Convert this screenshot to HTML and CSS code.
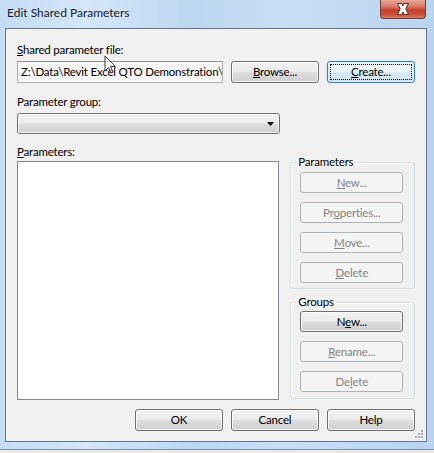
FILE: index.html
```html
<!DOCTYPE html>
<html lang="en">
<head>
  <meta charset="UTF-8">
  <title>Edit Shared Parameters</title>
  <link rel="stylesheet" href="styles.css">
</head>
<body>
  <div class="window">
    <div class="titlebar">
      <span class="title">Edit Shared Parameters</span>
      <div class="close-btn">
        <svg width="18" height="12" viewBox="0 0 18 12">
          <path d="M3.5 0.5 L8 0.5 L9 3 L10 0.5 L14.5 0.5 L11.8 6 L14.5 11.5 L10 11.5 L9 9 L8 11.5 L3.5 11.5 L6.2 6 Z" fill="#fff" stroke="#5a2a22" stroke-width="1"/>
        </svg>
      </div>
    </div>

    <div class="client">
      <div class="label"><u>S</u>hared parameter file:</div>
      <div class="file-row">
        <div class="textbox">Z:\Data\Revit Excel QTO Demonstration\(</div>
        <button type="button" class="btn"><u>B</u>rowse...</button>
        <button type="button" class="btn btn-default"><span class="focus-rect"><u>C</u>reate...</span></button>
      </div>

      <div class="label label-gap">Parameter <u>g</u>roup:</div>
      <div class="combo">
        <svg class="combo-arrow" width="7" height="4" viewBox="0 0 7 4"><path d="M0 0 H7 L3.5 4 Z" fill="#000"/></svg>
      </div>

      <div class="main">
        <div class="left-col">
          <div class="label"><u>P</u>arameters:</div>
          <div class="listbox"></div>
        </div>
        <div class="right-col">
          <fieldset class="group group-params">
            <legend>Parameters</legend>
            <button type="button" class="btn" disabled><u>N</u>ew...</button>
            <button type="button" class="btn" disabled>Pr<u>o</u>perties...</button>
            <button type="button" class="btn" disabled><u>M</u>ove...</button>
            <button type="button" class="btn" disabled><u>D</u>elete</button>
          </fieldset>
          <fieldset class="group group-groups">
            <legend>Groups</legend>
            <button type="button" class="btn">N<u>e</u>w...</button>
            <button type="button" class="btn" disabled><u>R</u>ename...</button>
            <button type="button" class="btn" disabled>De<u>l</u>ete</button>
          </fieldset>
        </div>
      </div>

      <div class="bottom-row">
        <button type="button" class="btn">OK</button>
        <button type="button" class="btn">Cancel</button>
        <button type="button" class="btn">Help</button>
      </div>

      <svg class="size-grip" width="9" height="9" viewBox="0 0 9 9">
        <g fill="#a8b0b8">
          <rect x="7" y="1" width="2" height="2"/>
          <rect x="4" y="4" width="2" height="2"/>
          <rect x="7" y="4" width="2" height="2"/>
          <rect x="1" y="7" width="2" height="2"/>
          <rect x="4" y="7" width="2" height="2"/>
          <rect x="7" y="7" width="2" height="2"/>
        </g>
      </svg>
    </div>
  </div>

  <!-- mouse pointer left in the capture -->
  <svg class="cursor" width="13" height="20" viewBox="0 0 13 20">
    <path d="M1 1 L1 16 L4.5 12.5 L7 18 L9 17 L6.5 11.5 L11.5 11.5 Z" fill="rgba(255,255,255,0.6)" stroke="#3a3a3a" stroke-width="1"/>
  </svg>
</body>
</html>
```

FILE: styles.css
```css
body {
  margin: 0;
  width: 434px;
  height: 453px;
  overflow: hidden;
  background-color: #e8e8e8;
  font-family: 'Lato', 'Open Sans', sans-serif;
  font-size: 11.5px;
  letter-spacing: -0.2px;
  color: #000;
}

.window {
  width: 434px;
  height: 450px;
  box-sizing: border-box;
  padding: 0 7px 7px 5px;
  display: flex;
  flex-direction: column;
  background: linear-gradient(90deg, #c4dcf4 0%, #d4e6f8 20%, #bcd6f1 45%, #c9def4 65%, #b9d4f0 100%);
  border-bottom: 1px solid #7b91a8;
}

.titlebar {
  height: 28px;
  flex-shrink: 0;
  display: flex;
  align-items: flex-start;
}

.title {
  margin: 5px 0 0 2px;
  font-size: 12px;
  letter-spacing: 0;
  line-height: 16px;
  color: #1a1a2a;
}

.close-btn {
  margin-left: auto;
  margin-right: 1px;
  width: 46px;
  height: 19px;
  box-sizing: border-box;
  border: 1px solid #7a3a30;
  border-top: none;
  border-radius: 0 0 4px 4px;
  background: linear-gradient(#e9a899 0%, #d77d6a 35%, #c4412c 55%, #c9503b 80%, #dc7a60 100%);
  display: flex;
  align-items: center;
  justify-content: center;
}

.client {
  flex: 1;
  position: relative;
  box-sizing: border-box;
  border: 1px solid #677687;
  background-color: #f0f0f0;
  padding: 13px 11px 0 11px;
  display: flex;
  flex-direction: column;
}

.label {
  line-height: 15px;
  height: 15px;
  white-space: nowrap;
}

.label-gap {
  margin-top: 11px;
}

.file-row {
  margin-top: 4px;
  display: flex;
  gap: 8px;
}

.textbox {
  width: 206px;
  height: 22px;
  box-sizing: border-box;
  border: 1px solid #abadb3;
  border-top-color: #8e8f8f;
  background-color: #f7f7f7;
  padding: 0 3px;
  line-height: 20px;
  white-space: nowrap;
  overflow: hidden;
}

.btn {
  width: 88px;
  height: 22px;
  box-sizing: border-box;
  padding: 0;
  border: 1px solid #707070;
  border-radius: 3px;
  background: linear-gradient(#f2f2f2 0%, #ebebeb 48%, #dddddd 52%, #cfcfcf 100%);
  box-shadow: inset 0 0 0 1px rgba(255, 255, 255, 0.75);
  font-family: inherit;
  font-size: inherit;
  letter-spacing: inherit;
  color: #000;
  line-height: 18px;
}

.btn:disabled {
  border-color: #adb2b5;
  background: #f4f4f4;
  box-shadow: none;
  color: #838383;
}

.btn-default {
  border-color: #3c7fb1;
  background: linear-gradient(#f1f8fd 0%, #e8f3fb 48%, #d8eaf6 52%, #cfe4f3 100%);
  box-shadow: inset 0 0 0 1px #cdebfb, 0 0 2px #b9dcf3;
  padding: 2px;
}

.focus-rect {
  display: block;
  height: 100%;
  box-sizing: border-box;
  border: 1px dotted #000;
  line-height: 14px;
}

.combo {
  margin-top: 4px;
  width: 263px;
  height: 21px;
  box-sizing: border-box;
  border: 1px solid #707070;
  border-radius: 3px;
  background: linear-gradient(#f2f2f2 0%, #ebebeb 48%, #dddddd 52%, #cfcfcf 100%);
  box-shadow: inset 0 0 0 1px rgba(255, 255, 255, 0.75);
  display: flex;
  align-items: center;
  justify-content: flex-end;
  padding-right: 5px;
}

.combo-arrow {
  margin-top: 1px;
}

.main {
  margin-top: 10px;
  display: flex;
  gap: 11px;
}

.left-col {
  width: 263px;
  display: flex;
  flex-direction: column;
}

.listbox {
  margin-top: 2px;
  height: 239px;
  box-sizing: border-box;
  border: 1px solid #828790;
  background-color: #fff;
}

.right-col {
  width: 125px;
  margin-top: 11px;
  display: flex;
  flex-direction: column;
  gap: 6px;
}

.group {
  margin: 0;
  min-width: 0;
  border: 1px solid #d5dfe5;
  border-radius: 3px;
  padding: 3px 10px 5px 9px;
  display: flex;
  flex-direction: column;
  gap: 9px;
  box-shadow: inset 1px 1px 0 #fff;
}

.group legend {
  padding: 0 1px;
  margin-left: -3px;
  line-height: 14px;
}

.group .btn {
  width: 103px;
  height: 21px;
  line-height: 17px;
}

.group-groups {
  padding-top: 2px;
  padding-bottom: 6px;
}

.bottom-row {
  margin-top: 9px;
  padding-left: 118px;
  display: flex;
  gap: 8px;
}

.size-grip {
  position: absolute;
  right: 3px;
  bottom: 3px;
}

.cursor {
  position: absolute;
  left: 104px;
  top: 55px;
}
```
